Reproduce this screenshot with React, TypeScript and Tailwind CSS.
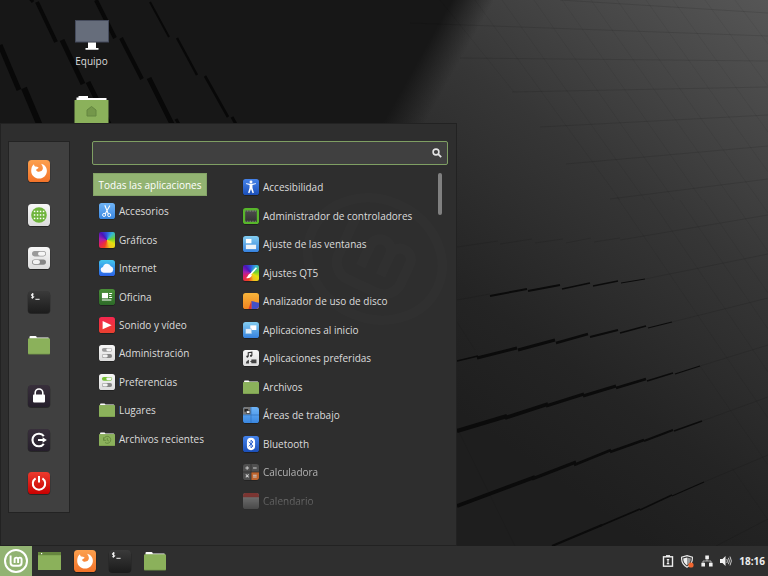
import type { ReactNode } from "react";

type Entry = { name: string; icon: ReactNode; tone?: string };

/* ---------- wallpaper ---------- */

const cracksRight: [number, number, number, number, number][] = [
  [490, 296, 527, 289, 2],
  [528, 291, 560, 285, 2],
  [562, 289, 590, 283, 1.6],
  [593, 286, 618, 281, 1.4],
  [621, 283, 645, 279, 1],
  [457, 361, 478, 356, 1.4],
  [477, 358, 517, 348, 3],
  [518, 350, 555, 340, 3],
  [556, 343, 588, 334, 2.6],
  [590, 337, 618, 330, 2.2],
  [620, 333, 646, 326, 1.8],
  [648, 328, 672, 322, 1.2],
  [457, 431, 507, 416, 4],
  [505, 418, 548, 404, 3.8],
  [546, 406, 584, 394, 3.4],
  [583, 396, 616, 386, 3],
  [616, 388, 646, 379, 2.4],
  [647, 381, 673, 373, 1.8],
  [675, 374, 700, 366, 1.2],
  [457, 506, 535, 477, 3.8],
  [532, 479, 576, 462, 3.2],
  [574, 465, 611, 450, 2.8],
  [610, 452, 644, 440, 2.4],
  [644, 441, 673, 430, 2],
  [674, 431, 702, 421, 1.4],
  [552, 546, 602, 525, 2],
  [600, 526, 640, 509, 1.8],
  [640, 510, 672, 495, 1.5],
  [672, 496, 704, 482, 1.1],
];

const cracksLeft: [number, number, number, number, number][] = [
  [37, 2, 56, 42, 4],
  [0, 45, 19, 90, 5],
  [24, 88, 40, 126, 6],
  [62, 40, 83, 84, 5],
  [96, 0, 115, 38, 4],
  [88, 82, 110, 126, 5],
  [121, 38, 142, 79, 4],
  [150, 2, 169, 37, 2],
  [149, 78, 173, 126, 5],
  [177, 38, 197, 75, 2.4],
  [205, 76, 228, 117, 2.6],
  [232, 117, 237, 126, 3],
  [28, -4, 33, 2, 3],
  [176, 119, 180, 126, 3],
];

const seams: [number, number, number, number][] = [
  [410, 23, 768, 36],
  [460, 58, 768, 61],
  [512, 92, 768, 87],
  [540, 127, 768, 115],
  [566, 164, 768, 146],
  [610, 199, 768, 179],
  [560, 0, 768, 13],
  [620, 240, 768, 215],
  [645, 279, 768, 254],
  [672, 322, 768, 298],
  [700, 366, 768, 345],
  [702, 421, 768, 397],
  [704, 482, 768, 455],
  [716, 546, 768, 519],
  [457, 300, 490, 294],
  [457, 247, 498, 241],
  [500, 244, 532, 239],
  [535, 243, 563, 239],
  [566, 243, 591, 238],
  [594, 242, 620, 238],
];

const faintSeams: [number, number, number, number][] = [
  [440, 0, 514, 92],
  [475, 0, 620, 200],
  [502, 0, 645, 200],
  [534, 0, 674, 200],
  [562, 0, 702, 200],
  [591, 0, 732, 200],
  [617, 0, 768, 213],
  [646, 0, 768, 172],
  [673, 0, 768, 132],
  [705, 0, 768, 86],
  [735, 0, 768, 44],
  [617, 197, 768, 418],
  [649, 197, 768, 372],
  [680, 200, 768, 329],
  [704, 200, 768, 293],
  [733, 200, 768, 252],
  [700, 366, 768, 465],
  [732, 468, 768, 520],
  [457, 322, 475, 350],
  [457, 428, 515, 546],
];

function Wallpaper() {
  return (
    <svg
      className="absolute inset-0 h-full w-full"
      viewBox="0 0 768 576"
      preserveAspectRatio="xMidYMid slice"
      aria-hidden="true"
    >
      <defs>
        <linearGradient id="light" gradientUnits="userSpaceOnUse" x1="768" y1="0" x2="470" y2="420">
          <stop offset="0" stopColor="#565656" />
          <stop offset="0.45" stopColor="#363636" />
          <stop offset="0.8" stopColor="#242424" />
          <stop offset="1" stopColor="#1e1e1e" />
        </linearGradient>
        <linearGradient id="shade" gradientUnits="userSpaceOnUse" x1="424" y1="50" x2="456" y2="68">
          <stop offset="0" stopColor="#171717" />
          <stop offset="1" stopColor="#171717" stopOpacity="0" />
        </linearGradient>
      </defs>
      <rect width="768" height="576" fill="url(#light)" />
      <rect width="768" height="200" fill="url(#shade)" />
      <g stroke="#000" strokeOpacity="0.13" strokeWidth="0.8">
        {seams.map(([a, b, c, d], i) => (
          <line key={i} x1={a} y1={b} x2={c} y2={d} />
        ))}
      </g>
      <g stroke="#000" strokeOpacity="0.07" strokeWidth="0.8">
        {faintSeams.map(([a, b, c, d], i) => (
          <line key={i} x1={a} y1={b} x2={c} y2={d} />
        ))}
      </g>
      <g stroke="#0b0b0b">
        {cracksRight.map(([a, b, c, d, w], i) => (
          <line key={i} x1={a} y1={b} x2={c} y2={d} strokeWidth={w} />
        ))}
      </g>
      <g stroke="#080808">
        {cracksLeft.map(([a, b, c, d, w], i) => (
          <line key={i} x1={a} y1={b} x2={c} y2={d} strokeWidth={w} />
        ))}
      </g>
    </svg>
  );
}

/* ---------- icons ---------- */

function Tile({ size, fill, children }: { size: string; fill: string; children?: ReactNode }) {
  return (
    <svg className={`${size} shrink-0 overflow-visible`} viewBox="0 0 22 22" aria-hidden="true">
      <rect x="-0.3" y="0.6" width="22.6" height="22.4" rx="3.8" fill="#000" opacity="0.4" />
      <rect width="22" height="22" rx="3.6" fill={fill} />
      {children}
    </svg>
  );
}

function Gradients() {
  const list: [string, string, string][] = [
    ["gOrange", "#fca04e", "#f37329"],
    ["gWhite", "#f7f7f7", "#dcdcdc"],
    ["gBlack", "#3a3a3a", "#1c1c1c"],
    ["gViolet", "#382f3b", "#251e2b"],
    ["gRed", "#ec3b2e", "#c90000"],
    ["gSky", "#6fb4f7", "#3a87e0"],
    ["gCyan", "#43c6ee", "#2a62e8"],
    ["gGreen", "#4a8f38", "#2d6a28"],
    ["gPlay", "#f5274f", "#e9402f"],
    ["gBlue", "#4583ea", "#1b4fb8"],
    ["gPane", "#83cdf0", "#3682df"],
    ["gAmber", "#f8b43a", "#ee8420"],
    ["gChip", "#4c4c4c", "#333333"],
  ];
  return (
    <svg className="absolute h-0 w-0" aria-hidden="true">
      <defs>
        {list.map(([id, a, b]) => (
          <linearGradient key={id} id={id} x1="0" y1="0" x2="0" y2="1">
            <stop offset="0" stopColor={a} />
            <stop offset="1" stopColor={b} />
          </linearGradient>
        ))}
      </defs>
    </svg>
  );
}

const S = "size-4";
const L = "size-[22px]";

function Firefox() {
  return (
    <Tile size={L} fill="url(#gOrange)">
      <path
        d="M4.2 6.2 C4.6 5.4 5.2 4.7 6 4.2 C6 5.2 6.3 5.9 7 6.500 C8.200 6.400 9.600 6.800 10.600 7.600 C10.400 8.900 8.600 9 8 10 C8.600 11.200 9.600 11.800 10.800 11.800 C13.600 11.800 15.200 9.800 14.800 7.600 C14.600 6.200 13.800 5 13.200 3.800 C16.800 4.600 19 7.600 18.900 11 C18.700 15.300 15.400 18.600 11.200 18.600 C6.600 18.600 3.200 15.200 3.200 11 C3.200 9.200 3.500 7.500 4.200 6.200 Z"
        fill="#fff"
      />
    </Tile>
  );
}

function AppGrid() {
  return (
    <Tile size={L} fill="url(#gWhite)">
      <circle cx="11" cy="11" r="7.8" fill="#6fb53c" />
      {[6.6, 9.6, 12.6, 15.6].map((x) =>
        [7.5, 11, 14.5].map((y) => (
          <rect key={`${x}-${y}`} x={x - 0.8} y={y - 0.8} width="1.5" height="1.5" fill="#fff" />
        ))
      )}
    </Tile>
  );
}

function Switches({ size, accent = "#9a9a9a" }: { size: string; accent?: string }) {
  return (
    <Tile size={size} fill="url(#gWhite)">
      <rect x="4" y="4" width="14" height="5.4" rx="2.7" fill={accent} />
      <rect x="10" y="4.7" width="7.3" height="4" rx="2" fill="#f6f6f6" />
      <rect x="4" y="12.4" width="14" height="5.4" rx="2.7" fill="#858585" />
      <rect x="4.7" y="13.1" width="7.3" height="4" rx="2" fill="#f2f2f2" />
    </Tile>
  );
}

function Terminal() {
  return (
    <Tile size={L} fill="url(#gBlack)">
      <path
        d="M5.8 3.1H4.2q-.9 0-.9.9t.9.9h.7q.9 0 .9.9t-.9.9H3.2M4.5 2.2v5.4M7.4 8.3h4.2"
        fill="none"
        stroke="#f2f2f2"
        strokeWidth="1"
      />
    </Tile>
  );
}

function Folder({ size, children }: { size: string; children?: ReactNode }) {
  return (
    <svg className={`${size} shrink-0 overflow-visible`} viewBox="0 0 22 22" aria-hidden="true">
      <path d="M1.500 6V3q0-1 1-1h5q.6 0 .9.600l.4.900H20q.9 0 .9.900V6Z" fill="#fdfdfd" />
      <rect x="0" y="4.600" width="22" height="16" rx="0.800" fill="#6c8e45" />
      <rect x="0" y="4.600" width="22" height="15.200" rx="0.800" fill="#8bb15b" />
      {children}
    </svg>
  );
}

function Lock() {
  return (
    <Tile size={L} fill="url(#gViolet)">
      <path d="M7.2 10V7.800a3.800 3.800 0 0 1 7.600 0V10" fill="none" stroke="#fff" strokeWidth="1.600" />
      <rect x="5" y="9.400" width="12" height="8" rx="0.800" fill="#fff" />
    </Tile>
  );
}

function Logout() {
  return (
    <Tile size={L} fill="url(#gViolet)">
      <path d="M15.800 7.200A6.300 6.300 0 1 0 15.800 14.800" fill="none" stroke="#fff" strokeWidth="2.100" />
      <path d="M10 11h6" stroke="#fff" strokeWidth="2" />
      <path d="M14.600 8.200l4.200 2.800-4.200 2.800Z" fill="#fff" />
    </Tile>
  );
}

function Power() {
  return (
    <Tile size={L} fill="url(#gRed)">
      <path d="M7.600 6.300a6.200 6.200 0 1 0 6.800 0M11 4v6.500" fill="none" stroke="#fff" strokeWidth="2" />
    </Tile>
  );
}

function Rainbow({ children }: { children?: ReactNode }) {
  return (
    <span className="relative block size-4 shrink-0 rounded-[2px] bg-[conic-gradient(from_0deg,#2f58e0,#35b8d0,#6ed02e,#e6e010,#f0c020,#f04020,#e02060,#a020b0,#4a14b8,#2f58e0)] shadow-[0_1px_1px_rgba(0,0,0,0.35)]">
      {children}
    </span>
  );
}

function MintLogo() {
  return (
    <svg className="size-6" viewBox="0 0 24 24" fill="none" stroke="#fff" aria-hidden="true">
      <circle cx="12" cy="12" r="11" strokeWidth="2" />
      <path
        d="M6.600 6.600v7.200a3 3 0 0 0 3 3h5a3 3 0 0 0 3-3v-3.400a1.750 1.750 0 0 0-3.500 0V14M14.100 10.400a1.750 1.750 0 0 0-3.500 0V14"
        strokeWidth="1.900"
      />
    </svg>
  );
}

const categories: Entry[] = [
  {
    name: "Accesorios",
    icon: (
      <Tile size={S} fill="url(#gSky)">
        <path d="M8 3l4.8 12M15 3.4L8.4 15" stroke="#fff" strokeWidth="1.5" />
        <circle cx="7" cy="16.4" r="2.1" fill="none" stroke="#fff" strokeWidth="1.3" />
        <circle cx="14" cy="16.6" r="2.1" fill="none" stroke="#fff" strokeWidth="1.3" />
      </Tile>
    ),
  },
  { name: "Gráficos", icon: <Rainbow /> },
  {
    name: "Internet",
    icon: (
      <Tile size={S} fill="url(#gCyan)">
        <path d="M6.300 17.400a4 4 0 0 1-.8-7.900A5.600 5.600 0 0 1 16.200 8.600a4.500 4.500 0 0 1-.4 8.800Z" fill="#f7f8ff" />
      </Tile>
    ),
  },
  {
    name: "Oficina",
    icon: (
      <Tile size={S} fill="url(#gGreen)">
        <rect x="4" y="5.400" width="8.400" height="7.400" fill="#fff" />
        <path d="M14 6.200h4M14 9h3M14 11.800h4M4 15.200h13" stroke="#fff" strokeWidth="1.400" />
      </Tile>
    ),
  },
  {
    name: "Sonido y vídeo",
    icon: (
      <Tile size={S} fill="url(#gPlay)">
        <path d="M5 5.600l12.400 5.600L5 16.800Z" fill="#fff" />
      </Tile>
    ),
  },
  { name: "Administración", icon: <Switches size={S} /> },
  { name: "Preferencias", icon: <Switches size={S} accent="#74bf34" /> },
  { name: "Lugares", icon: <Folder size={S} /> },
  {
    name: "Archivos recientes",
    icon: (
      <Folder size={S}>
        <path
          d="M6.600 12.600a4.800 4.800 0 1 1 1.700 3.200M6.200 8.800v4h3.600M11.400 9.600v3l2.200 1.200"
          fill="none"
          stroke="#65883e"
          strokeWidth="1.300"
        />
      </Folder>
    ),
  },
];

const apps: Entry[] = [
  {
    name: "Accesibilidad",
    icon: (
      <Tile size={S} fill="url(#gBlue)">
        <circle cx="11" cy="4.200" r="2" fill="#fff" />
        <path
          d="M4 7l5 1.200v4L7 19l1.800.6L11 13.600l2.200 6L15 19l-2-6.800v-4L18 7l-.3-1.200-5 .9H9.300l-5-.9Z"
          fill="#fff"
        />
      </Tile>
    ),
  },
  {
    name: "Administrador de controladores",
    icon: (
      <Tile size={S} fill="#58b62b">
        <rect x="3" y="3.400" width="16" height="15.600" fill="url(#gChip)" />
        <path d="M3.400 4.200h15.200M3.400 18.200h15.200" stroke="#b8b8b8" strokeWidth="1" strokeDasharray="1 1.200" />
      </Tile>
    ),
  },
  {
    name: "Ajuste de las ventanas",
    icon: (
      <Tile size={S} fill="url(#gPane)">
        <rect x="4" y="4" width="7.600" height="6" fill="#fff" />
        <rect x="4" y="12" width="14" height="6" fill="#eef3f8" />
      </Tile>
    ),
  },
  {
    name: "Ajustes QT5",
    icon: (
      <Rainbow>
        <svg className="size-4" viewBox="0 0 22 22" aria-hidden="true">
          <path d="M18.500 3.800L10 13" stroke="#fff" strokeWidth="2.200" />
          <path d="M9.800 11.600l2.400 2.600c-1 3.600-4.600 4.600-8 3.800 2.200-1.200 2.200-5 5.600-6.400Z" fill="#fff" />
        </svg>
      </Rainbow>
    ),
  },
  {
    name: "Analizador de uso de disco",
    icon: (
      <Tile size={S} fill="url(#gAmber)">
        <path d="M11.500 11L22 13.500V18.600a3.400 3.400 0 0 1-3.400 3.400H11.500Z" fill="#4150c8" />
        <path d="M11.500 11V22H7.500Z" fill="#dc3530" />
      </Tile>
    ),
  },
  {
    name: "Aplicaciones al inicio",
    icon: (
      <Tile size={S} fill="url(#gPane)">
        <rect x="10" y="4.600" width="8.400" height="6.400" fill="#fff" />
        <rect x="3.600" y="9.400" width="8.400" height="6.800" fill="#e3edf7" stroke="#70aee0" strokeWidth="0.600" />
      </Tile>
    ),
  },
  {
    name: "Aplicaciones preferidas",
    icon: (
      <Tile size={S} fill="url(#gWhite)">
        <path d="M7.200 9V3.800l5-.8v5" fill="none" stroke="#333" strokeWidth="1.500" />
        <circle cx="6" cy="9" r="1.500" fill="#333" />
        <circle cx="11" cy="8" r="1.500" fill="#333" />
        <path d="M4 18.500q0-3.500 4.200-5v5Z M11.500 13.200h7v5h-7v-1.400l-2-1 2-1Z" fill="#444" />
      </Tile>
    ),
  },
  { name: "Archivos", icon: <Folder size={S} /> },
  {
    name: "Áreas de trabajo",
    icon: (
      <Tile size={S} fill="url(#gSky)">
        <path d="M0 10.500V3.400A3.400 3.400 0 0 1 3.400 0H10.500V10.500Z" fill="#777" />
        <rect x="2" y="2.800" width="5" height="3.600" fill="#222" />
        <rect x="4.500" y="5.200" width="5" height="3.600" fill="#eee" stroke="#222" strokeWidth="0.800" />
        <path d="M11 0v22M0 11h22" stroke="#2d6db8" strokeWidth="0.900" />
      </Tile>
    ),
  },
  {
    name: "Bluetooth",
    icon: (
      <Tile size={S} fill="url(#gBlue)">
        <rect x="5.400" y="2.500" width="11.200" height="17" rx="5.600" fill="#fff" />
        <path
          d="M7.800 8l6 5.600-2.800 2.600V5.800L13.800 8.400l-6 5.600"
          fill="none"
          stroke="#2a60cc"
          strokeWidth="1.300"
        />
      </Tile>
    ),
  },
  {
    name: "Calculadora",
    tone: "opacity-75",
    icon: (
      <Tile size={S} fill="#5a5a5a">
        <path d="M11 11h11v7.600a3.400 3.400 0 0 1-3.400 3.400H11Z" fill="#f0762c" />
        <path d="M11 0v22M0 11h22" stroke="#2c2c2c" strokeWidth="1" />
        <path
          d="M3.200 5.500h5M5.700 3v5M13.800 5.500h5M3.800 14.400l4 4M7.800 14.400l-4 4M13.800 15.500h5M13.800 18h5"
          stroke="#fff"
          strokeWidth="1.400"
        />
      </Tile>
    ),
  },
  {
    name: "Calendario",
    tone: "mask-b-from-30% mask-b-to-110% opacity-40",
    icon: (
      <Tile size={S} fill="#d8d8d8">
        <path d="M0 6V3.400A3.400 3.400 0 0 1 3.400 0H18.600A3.400 3.400 0 0 1 22 3.400V6Z" fill="#ee4038" />
      </Tile>
    ),
  },
];

const favorites: Entry[] = [
  { name: "Firefox", icon: <Firefox /> },
  { name: "Gestor de software", icon: <AppGrid /> },
  { name: "Configuración del sistema", icon: <Switches size={L} /> },
  { name: "Terminal", icon: <Terminal /> },
  { name: "Archivos", icon: <Folder size={L} /> },
];

const session: Entry[] = [
  { name: "Bloquear pantalla", icon: <Lock /> },
  { name: "Cerrar sesión", icon: <Logout /> },
  { name: "Apagar", icon: <Power /> },
];

const windows: Entry[] = [
  {
    name: "Mostrar escritorio",
    icon: (
      <svg className="h-[18px] w-[23px]" viewBox="0 0 23 18" aria-hidden="true">
        <rect width="23" height="18" rx="0.600" fill="#8bb15b" />
        <rect width="23" height="3.200" fill="#66863f" />
        <rect x="3" y="1" width="1.200" height="1.200" fill="#fff" />
      </svg>
    ),
  },
  { name: "Firefox", icon: <Firefox /> },
  { name: "Terminal", icon: <Terminal /> },
  { name: "Archivos", icon: <Folder size={L} /> },
];

/* ---------- panels ---------- */

function IconColumn({ items, height }: { items: Entry[]; height: string }) {
  return (
    <div className={`flex flex-col items-center justify-between ${height}`}>
      {items.map((e) => (
        <button key={e.name} type="button" aria-label={e.name} className="block">
          {e.icon}
        </button>
      ))}
    </div>
  );
}

function EntryList({ items, height }: { items: Entry[]; height: string }) {
  return (
    <ul className={`grid auto-rows-fr ${height}`}>
      {items.map((e) => (
        <li key={e.name} className={`flex ${e.tone ?? ""}`}>
          <button type="button" className="flex items-center gap-1 text-left whitespace-nowrap">
            {e.icon}
            <span>{e.name}</span>
          </button>
        </li>
      ))}
    </ul>
  );
}

function Menu() {
  return (
    <section
      aria-label="Menú"
      className="absolute bottom-0 left-0 flex w-[457px] gap-[22px] border border-[#222] bg-[#2e2e2e] pt-[17px] pr-2 pb-[30px] pl-[7px]"
    >
      <svg
        className="absolute top-[60px] right-[6px] size-[150px] opacity-[0.007]"
        viewBox="0 0 24 24"
        fill="none"
        stroke="#fff"
        aria-hidden="true"
      >
        <g transform="rotate(25 12 12)">
          <ellipse cx="12" cy="12" rx="11" ry="9.500" strokeWidth="1.500" />
          <path
            d="M6.400 6.600v7.200a3 3 0 0 0 3 3h5a3 3 0 0 0 3-3v-3.400a1.750 1.750 0 0 0-3.500 0V14M13.900 10.400a1.750 1.750 0 0 0-3.500 0V14"
            strokeWidth="1.600"
          />
        </g>
      </svg>
      <nav
        aria-label="Favoritos"
        className="mb-[2px] flex w-[62px] shrink-0 flex-col justify-between border border-[#232323] bg-[#404040] py-[18px]"
      >
        <IconColumn items={favorites} height="h-[196px]" />
        <IconColumn items={session} height="h-[109px]" />
      </nav>
      <div className="relative flex min-w-0 flex-1 flex-col">
        <div className="flex h-6 items-center rounded-[2px] border border-[#7f9f63] bg-[#404040] pr-[5px]">
          <input type="text" aria-label="Buscar" className="h-full min-w-0 flex-1 bg-transparent px-2 outline-none" />
          <svg className="size-[10px]" viewBox="0 0 10 10" fill="none" stroke="#e4e4e4" aria-hidden="true">
            <circle cx="4" cy="4" r="2.900" strokeWidth="1.600" />
            <path d="M6.200 6.200L9.200 9.200" strokeWidth="1.800" />
          </svg>
        </div>
        <div className="flex pt-2">
          <div className="w-[151px] shrink-0">
            <button
              type="button"
              className="ml-px flex h-[23px] w-[114px] items-center justify-center border border-[#83a366] bg-[#92b372] whitespace-nowrap text-white"
            >
              Todas las aplicaciones
            </button>
            <div className="pt-px pl-[7px]">
              <EntryList items={categories} height="h-64" />
            </div>
          </div>
          <div className="flex-1">
            <EntryList items={apps} height="h-[342px]" />
          </div>
          <div className="mr-[6px] h-[42px] w-1 rounded-full bg-[#808080]" />
        </div>
      </div>
    </section>
  );
}

function Tray() {
  return (
    <div className="flex items-center gap-[7px] pr-[3px]">
      <svg className="h-3 w-3" viewBox="0 0 12 12" fill="none" stroke="#eee" aria-hidden="true">
        <rect x="1.500" y="1.800" width="9" height="9.400" strokeWidth="1.400" />
        <path d="M4 1h4" strokeWidth="1.800" />
        <path d="M6 4.200v4.600M4.800 4.600h2.400M4.800 8.600h2.400" strokeWidth="1.100" />
      </svg>
      <svg className="h-[13px] w-[13px]" viewBox="0 0 13 13" aria-hidden="true">
        <path d="M6 .6L11.400 2.200Q11.800 9 6 12.200Q.2 9 .6 2.200Z" fill="none" stroke="#e6e6e6" strokeWidth="1.200" />
        <path d="M6 2.400L9.800 3.500Q9.800 8 6 10.400Z" fill="#9a9a9a" />
        <path d="M6 2.400L2.200 3.500Q2.200 8 6 10.400Z" fill="#eee" />
        <circle cx="10" cy="10" r="2.600" fill="#f0652f" />
      </svg>
      <svg className="h-3 w-3" viewBox="0 0 12 12" aria-hidden="true">
        <path d="M4.300.6h3.600v3.600H4.300ZM.4 7.800H4v3.600H.4ZM8 7.800h3.600v3.600H8Z" fill="#f0f0f0" />
        <path d="M6 4v2M2 8V6h8v2" fill="none" stroke="#bbb" strokeWidth="0.900" />
      </svg>
      <svg className="h-3 w-3" viewBox="0 0 12 12" fill="none" stroke="#c8c8c8" aria-hidden="true">
        <path d="M0 4h2.500L5.500 1v10L2.500 8H0Z" fill="#f2f2f2" stroke="none" />
        <path d="M6.800 4q1.200 2 0 4M8.400 2.800q2 3.200 0 6.400M10 1.600q2.800 4.400 0 8.800" strokeWidth="1" />
      </svg>
      <time className="font-bold text-[#ececec]">18:16</time>
    </div>
  );
}

export default function App() {
  return (
    <main className="relative flex h-screen w-full flex-col overflow-hidden bg-[#171717] font-['Open_Sans','Noto_Sans',sans-serif] text-[10px] leading-4 text-[#dcdcdc]">
      <Gradients />
      <Wallpaper />
      <div className="relative flex-1">
        <div className="flex w-[183px] flex-col items-center gap-[26px] pt-5">
          <button type="button" className="flex flex-col items-center gap-[3px]">
            <svg className="h-[30px] w-[34px]" viewBox="0 0 34 30" aria-hidden="true">
              <rect x="0.500" y="0.500" width="33" height="21.500" fill="#666d7b" stroke="#454b5c" />
              <path d="M13 22.500h8v5.500h2.500v1.800h-13V28H13Z" fill="#fff" />
            </svg>
            <span>Equipo</span>
          </button>
          <button type="button" aria-label="Carpeta personal">
            <svg className="h-[34px] w-[35px]" viewBox="0 0 35 34" aria-hidden="true">
              <path d="M2.500 6V2.500h2V1h9.500v2H32.500V6Z" fill="#fff" />
              <rect x="0.500" y="5" width="34" height="26" rx="0.500" fill="#8bb15b" />
              <path d="M17.500 11.500l4.500 3.500v6h-9v-6Z" fill="#74974a" stroke="#648640" />
            </svg>
          </button>
        </div>
        <Menu />
      </div>
      <footer className="relative flex h-[30px] shrink-0 items-center justify-between bg-[#2f2f2f]">
        <div className="flex h-full items-center gap-[6px]">
          <button type="button" aria-label="Menú" className="flex h-full w-8 items-center justify-center bg-[#92b372]">
            <MintLogo />
          </button>
          <div className="flex items-center gap-[13px]">
            {windows.map((w) => (
              <button key={w.name} type="button" aria-label={w.name} className="block">
                {w.icon}
              </button>
            ))}
          </div>
        </div>
        <Tray />
      </footer>
    </main>
  );
}
